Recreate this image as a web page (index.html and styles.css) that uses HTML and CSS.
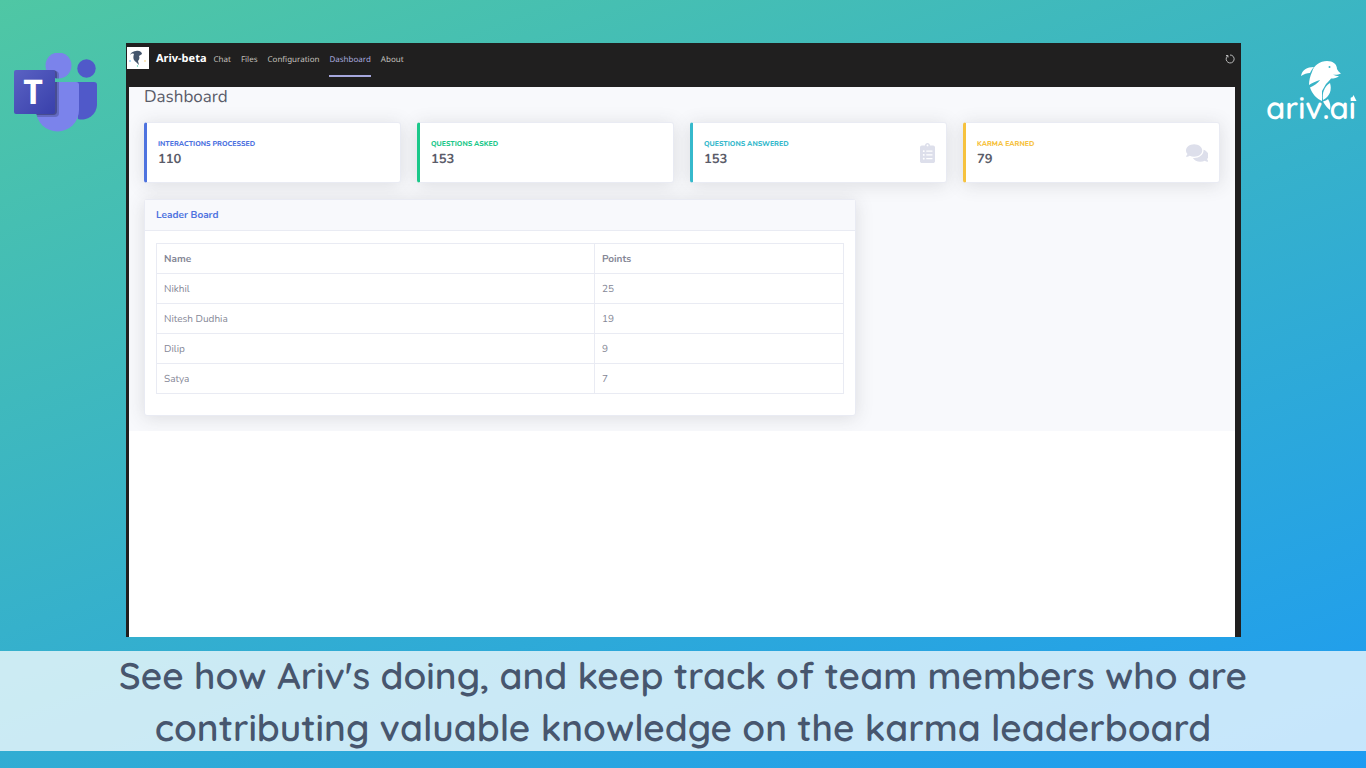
FILE: index.html
```html
<!DOCTYPE html>
<html lang="en">
<head>
  <meta charset="UTF-8">
  <title>Ariv Dashboard</title>
  <meta name="viewport" content="width=device-width, initial-scale=1.0">
  <link rel="stylesheet" href="styles.css">
</head>
<body>
  <main class="stage">
    <div class="side">
      <svg class="teams-logo" viewBox="0 0 84 80" role="img" aria-label="Microsoft Teams">
        <defs>
          <linearGradient id="tile" x1="0" y1="0" x2="1" y2="1">
            <stop offset="0" stop-color="#5a62c3"/>
            <stop offset="1" stop-color="#3940ab"/>
          </linearGradient>
          <clipPath id="person">
            <circle cx="44.500" cy="12.500" r="13"/>
            <path d="M22 29h40a3 3 0 0 1 3 3v25a21.500 21.500 0 0 1-43 0z"/>
          </clipPath>
        </defs>
        <circle cx="72.500" cy="15.500" r="9.200" fill="#5059c9"/>
        <path d="M62 29h18a3 3 0 0 1 3 3v20a15 15 0 0 1-19 14z" fill="#5059c9"/>
        <circle cx="44.500" cy="12.500" r="13" fill="#7b83eb"/>
        <path d="M22 29h40a3 3 0 0 1 3 3v25a21.500 21.500 0 0 1-43 0z" fill="#7b83eb"/>
        <g clip-path="url(#person)">
          <rect x="4" y="18" width="41" height="46" rx="4" fill="#363b72" opacity=".35"/>
          <rect x="3" y="17" width="40" height="45" rx="4" fill="#363b72" opacity=".6"/>
        </g>
        <rect y="17" width="41" height="44" rx="2" fill="url(#tile)"/>
        <text class="tile-letter" x="19" y="51" text-anchor="middle">T</text>
      </svg>
    </div>

    <section class="window">
      <header class="topbar">
        <svg class="app-icon" viewBox="0 0 22 22" aria-hidden="true">
          <rect width="22" height="22" fill="#fff"/>
          <path d="M3 8C4 5 7 4 9 4c3-1 6 1 6 3-1 1-2 1-3 2 1 2 0 4-1 5l1 4-3-3C6 13 6 10 7 7 5 6 4 7 3 8z" fill="#43546b"/>
          <circle cx="3" cy="14" r="0.700" fill="#32a4e8"/>
          <circle cx="18" cy="14" r="0.700" fill="#f2bd45"/>
          <circle cx="10.500" cy="19" r="0.700" fill="#4cc9ae"/>
        </svg>
        <strong class="app-name">Ariv-beta</strong>
        <nav class="tabs">
          <a href="#chat">Chat</a>
          <a href="#files">Files</a>
          <a href="#configuration">Configuration</a>
          <a href="#dashboard" class="active">Dashboard</a>
          <a href="#about">About</a>
        </nav>
        <button class="refresh" type="button" aria-label="Refresh">
          <svg viewBox="0 0 10 10" fill="none" stroke="#b8b8b8">
            <path d="M2.500 2A4 4 0 1 0 5 1M1 1.500h2v2"/>
          </svg>
        </button>
      </header>

      <div class="page">
        <div class="content">
          <h1>Dashboard</h1>
          <div class="grid">
            <div class="card stat blue">
              <div>
                <h2>Interactions processed</h2>
                <p>110</p>
              </div>
            </div>
            <div class="card stat green">
              <div>
                <h2>Questions asked</h2>
                <p>153</p>
              </div>
            </div>
            <div class="card stat teal">
              <div>
                <h2>Questions answered</h2>
                <p>153</p>
              </div>
              <svg class="stat-icon" viewBox="0 0 384 512" aria-hidden="true">
                <path d="M336 64h-80c0-35.300-28.700-64-64-64s-64 28.700-64 64H48C21.500 64 0 85.500 0 112v352c0 26.500 21.500 48 48 48h288c26.500 0 48-21.500 48-48V112c0-26.500-21.500-48-48-48zM96 424c-13.300 0-24-10.700-24-24s10.700-24 24-24 24 10.700 24 24-10.700 24-24 24zm0-96c-13.300 0-24-10.700-24-24s10.700-24 24-24 24 10.700 24 24-10.700 24-24 24zm0-96c-13.300 0-24-10.700-24-24s10.700-24 24-24 24 10.700 24 24-10.700 24-24 24zm96-192c13.300 0 24 10.700 24 24s-10.700 24-24 24-24-10.700-24-24 10.700-24 24-24zm128 368c0 4.400-3.600 8-8 8H168c-4.400 0-8-3.600-8-8v-16c0-4.400 3.600-8 8-8h144c4.400 0 8 3.600 8 8v16zm0-96c0 4.400-3.600 8-8 8H168c-4.400 0-8-3.600-8-8v-16c0-4.400 3.600-8 8-8h144c4.400 0 8 3.600 8 8v16zm0-96c0 4.400-3.600 8-8 8H168c-4.400 0-8-3.600-8-8v-16c0-4.400 3.600-8 8-8h144c4.400 0 8 3.600 8 8v16z"/>
              </svg>
            </div>
            <div class="card stat yellow">
              <div>
                <h2>Karma earned</h2>
                <p>79</p>
              </div>
              <svg class="stat-icon" viewBox="0 0 576 512" aria-hidden="true">
                <path d="M416 192c0-88.400-93.100-160-208-160S0 103.600 0 192c0 34.300 14.100 65.900 38 92-13.400 30.200-35.500 54.200-35.800 54.500-2.200 2.300-2.800 5.700-1.500 8.700S4.800 352 8 352c36.600 0 66.900-12.300 88.700-25 32.200 15.700 70.300 25 111.300 25 114.900 0 208-71.600 208-160zm122 220c23.900-26 38-57.700 38-92 0-66.900-53.500-124.200-129.300-148.100.9 6.600 1.300 13.300 1.300 20.100 0 105.900-107.700 192-240 192-10.800 0-21.300-.8-31.700-1.900C207.800 439.600 281.800 480 368 480c41 0 79.100-9.200 111.300-25 21.800 12.700 52.100 25 88.700 25 3.200 0 6.100-1.900 7.300-4.800 1.300-2.900.7-6.300-1.500-8.700-.3-.3-22.400-24.200-35.800-54.500z"/>
              </svg>
            </div>

            <div class="card board">
              <h2 class="board-title">Leader Board</h2>
              <table>
                <thead>
                  <tr><th scope="col">Name</th><th scope="col">Points</th></tr>
                </thead>
                <tbody>
                  <tr><td>Nikhil</td><td>25</td></tr>
                  <tr><td>Nitesh Dudhia</td><td>19</td></tr>
                  <tr><td>Dilip</td><td>9</td></tr>
                  <tr><td>Satya</td><td>7</td></tr>
                </tbody>
              </table>
            </div>
          </div>
        </div>
      </div>
    </section>

    <div class="side">
      <svg class="ariv-logo" viewBox="0 0 98 72" role="img" aria-label="ariv.ai" fill="#fff">
        <!-- dolphin -->
        <path d="M37 15C38 9 43 6 50 6 48 8 47 10 46 12 43 12 40 13 37 15z"/>
        <path d="M45 24C45 20 46 15 48 11 50 4 56 0 63 0 69 0 73 3 73 8 74 10 75 11 77 12.500 74 14 71 14 69 13.500 71 14.800 73 15 75 15 73 17 70 17.500 67 17.500 66 19 64 21 62 23L58 30V40C53 38 48 33 46 26.500 50 25 54 22 56 19 52 20 48 22 45 24z"/>
        <path d="M66 22C68 29 66 35 59 39 58 32 60 26 66 22z"/>
        <path d="M59 40.500C61 40 63 39 64 38 66 41 67 45 66 49 63 47 61 44 59 40.500z"/>
        <circle cx="65.500" cy="6" r="1" fill="#3eb5c6"/>
        <path d="M89.500 34l3 6h-6z"/>
        <text class="ariv-word" x="2" y="58">ariv.ai</text>
      </svg>
    </div>
  </main>

  <footer class="caption">
    <p>See how Ariv's doing, and keep track of team members who are contributing valuable knowledge on the karma leaderboard</p>
  </footer>
</body>
</html>
```
FILE: styles.css
```css
* {
  box-sizing: border-box;
}
body {
  margin: 0;
  min-height: 100vh;
  padding: 43px 0 17px;
  display: flex;
  flex-direction: column;
  gap: 14px;
  font-family: Nunito, "Open Sans", sans-serif;
  text-rendering: geometricPrecision;
  background: linear-gradient(160deg, #4fc7a4, #1d9bf2);
  color: #858796;
}
h1, h2, p {
  margin: 0;
}
.stage {
  flex: 1;
  display: grid;
  grid-template-columns: 126px 1fr 125px;
}
.teams-logo {
  display: block;
  width: 84px;
  margin: 10px 0 0 14px;
}
.tile-letter {
  font: bold 34px "Open Sans", sans-serif;
  fill: #fff;
}
.ariv-logo {
  display: block;
  width: 98px;
  margin: 18px 0 0 23px;
}
.ariv-word {
  font: 600 31px Quicksand, Lato, sans-serif;
}

/* app window */
.window {
  display: flex;
  flex-direction: column;
  background: #201f1f;
  padding: 0 6px 0 3px;
}
.topbar {
  display: flex;
  height: 44px;
  padding-bottom: 10px;
  margin-left: -2px;
  font-family: "Noto Sans", sans-serif;
}
.app-icon {
  width: 22px;
  height: 22px;
  margin: 4px 7px 0 0;
}
.app-name {
  color: #fff;
  font-size: 11px;
  line-height: 31px;
}
.tabs {
  display: flex;
  gap: 10px;
  margin-left: 7px;
}
.tabs a {
  color: #c3c0bd;
  font-size: 8px;
  line-height: 33px;
  text-decoration: none;
}
.tabs .active {
  color: #a6a7dc;
  border-bottom: 2px solid #a6a7dc;
}
.refresh {
  width: 10px;
  height: 10px;
  margin: 11px 0 0 auto;
  padding: 0;
  border: none;
  background: none;
}
.refresh svg {
  display: block;
}
.page {
  flex: 1;
  background: #fff;
}
.content {
  background: #f8f9fc;
  padding: 0 15px 15px;
  overflow: hidden;
}
h1 {
  color: #5a5c69;
  font-size: 17px;
  font-weight: 400;
  line-height: 22px;
  margin-bottom: 13px;
}
.grid {
  display: grid;
  grid-template-columns: repeat(12, 1fr);
  gap: 16px;
}
.card {
  background: #fff;
  border: 1px solid #e9ebf3;
  border-radius: 3px;
  box-shadow: 0 2px 18px rgba(58, 59, 69, 0.15);
}

/* stat cards */
.stat {
  grid-column: span 3;
  display: flex;
  align-items: center;
  justify-content: space-between;
  height: 61px;
  padding: 1px 11px 0;
  border-left: 3px solid;
}
.stat h2 {
  font-size: 7px;
  font-weight: 800;
  line-height: 11px;
  text-transform: uppercase;
}
.stat p {
  color: #5a5c69;
  font-size: 13px;
  font-weight: 700;
  line-height: 18px;
}
.blue {
  border-left-color: #4e73df;
}
.blue h2 {
  color: #4e73df;
}
.green {
  border-left-color: #1cc88a;
}
.green h2 {
  color: #1cc88a;
}
.teal {
  border-left-color: #36b9cc;
}
.teal h2 {
  color: #36b9cc;
}
.yellow {
  border-left-color: #f6c23e;
}
.yellow h2 {
  color: #f6c23e;
}
.stat-icon {
  height: 20px;
  fill: #dddfeb;
}

/* leader board */
.board {
  grid-column: span 8;
  padding-bottom: 21px;
}
.board-title {
  padding: 0 11px;
  background: #f8f9fc;
  border-bottom: 1px solid #e9ebf3;
  color: #4e73df;
  font-size: 10px;
  line-height: 30px;
}
table {
  width: calc(100% - 22px);
  margin: 12px 11px 0;
  border-collapse: collapse;
  table-layout: fixed;
  font-size: 10px;
}
th, td {
  height: 30px;
  padding: 0 7px;
  border: 1px solid #e9ebf3;
  text-align: left;
}
th:last-child {
  width: 249px;
}

.caption {
  display: flex;
  align-items: center;
  justify-content: center;
  height: 100px;
  padding: 2px 100px 0;
  background: rgba(255, 255, 255, 0.75);
  color: #47566e;
  font-family: Quicksand, Lato, sans-serif;
  font-size: 37px;
  font-weight: 600;
  line-height: 52px;
  text-align: center;
}
```
